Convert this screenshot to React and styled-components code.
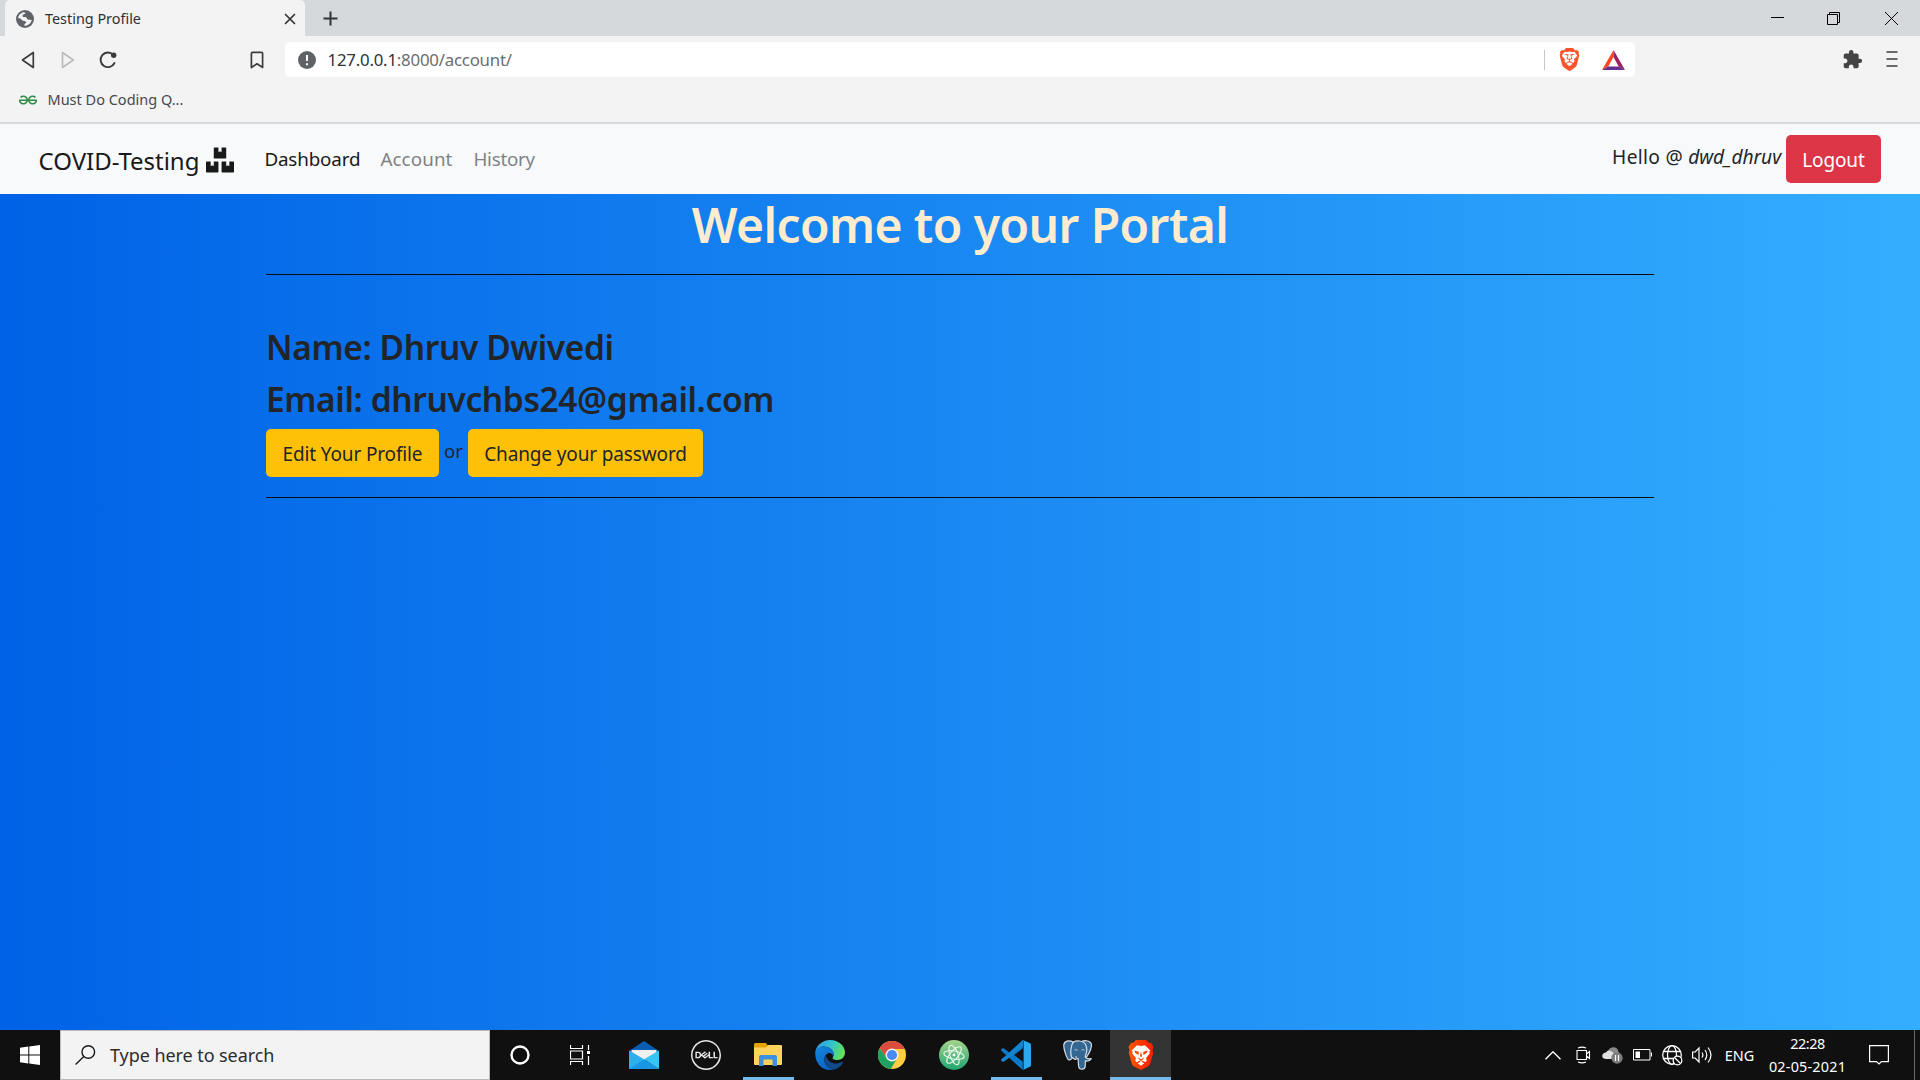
import React from "react";
import styled, { createGlobalStyle } from "styled-components";
import { FaBoxes } from "react-icons/fa";
import { SiBrave, SiDell, SiGeeksforgeeks } from "react-icons/si";
import { MdExtension } from "react-icons/md";

const GlobalStyle = createGlobalStyle`
  * { box-sizing: border-box; }
  body {
    margin: 0;
    font-family: "Noto Sans", "Open Sans", sans-serif;
    font-weight: 400;
    color: #212529;
    overflow: hidden;
  }
  svg { display: block; flex: none; }
`;

const Screen = styled.div`
  width: 1920px;
  height: 1080px;
  display: flex;
  flex-direction: column;
  overflow: hidden;
  white-space: nowrap;
`;

/* browser chrome */
const TabStrip = styled.div`
  height: 36px;
  flex: none;
  display: flex;
  align-items: stretch;
  padding-left: 5px;
  background: #d5d9dc;
`;

const Tab = styled.div`
  width: 300px;
  height: 37px;
  display: flex;
  align-items: center;
  padding: 0 9px 0 11px;
  background: #f3f3f3;
  border-radius: 5px 5px 0 0;
  font-size: 14.4px;
  color: #2e3033;
`;

const TabTitle = styled.span`
  flex: 1;
  margin-left: 11px;
`;

const NewTab = styled.div`
  width: 50px;
  display: grid;
  place-items: center;
  padding-top: 1px;
`;

const WindowControls = styled.div`
  margin-left: auto;
  display: flex;
`;

const WindowButton = styled.div`
  width: ${(p) => p.$w || 57}px;
  height: 37px;
  display: grid;
  place-items: center;
`;

const Toolbar = styled.div`
  height: 48px;
  flex: none;
  display: flex;
  align-items: center;
  background: #f3f3f3;
`;

const NavButtons = styled.div`
  width: 285px;
  display: flex;
  align-items: center;
  padding-left: 21px;
`;

const Reload = styled.div`
  margin-left: 24px;
`;
const Forward = styled.div`
  margin-left: 26px;
`;
const BookmarkMark = styled.div`
  margin-left: auto;
  margin-right: 21px;
`;

const AddressBar = styled.div`
  width: 1350px;
  height: 35px;
  display: flex;
  align-items: center;
  margin-bottom: 1px;
  padding: 0 10px 0 13px;
  background: #fff;
  border-radius: 5px;
  font-size: 16.8px;
  letter-spacing: -0.2px;
  color: #6a6d70;
`;

const Url = styled.span`
  flex: 1;
  margin-left: 11.5px;
  b {
    font-weight: 400;
    color: #303234;
  }
`;

const Divider = styled.i`
  width: 1px;
  height: 20px;
  margin-right: 13px;
  background: #c4c6c8;
`;

const Shield = styled(SiBrave)`
  margin-right: 21px;
  color: #fb542b;
`;

const ToolbarEnd = styled.div`
  margin-left: auto;
  display: flex;
  align-items: center;
  gap: 23px;
  padding: 0 22px 2px 0;
  color: #444;
`;

const BookmarksBar = styled.div`
  height: 40px;
  flex: none;
  display: flex;
  align-items: flex-start;
  gap: 10.5px;
  padding: 5px 0 0 19px;
  background: #f3f3f3;
  border-bottom: 2px solid #d5d9dc;
  font-size: 14.5px;
  line-height: 20px;
  color: #47494c;
  svg { margin-top: 2px; }
`;

/* web page */
const Navbar = styled.nav`
  height: 70px;
  flex: none;
  display: flex;
  align-items: center;
  padding: 0 39px 0 38.5px;
  background: #f8f9fb;
`;

const Brand = styled.div`
  display: flex;
  align-items: center;
  gap: 7px;
  margin-right: 30px;
  padding-top: 2px;
  font-size: 24px;
  letter-spacing: -0.02px;
  color: #191919;
`;

const NavLinks = styled.div`
  display: flex;
  gap: 20px;
  padding-top: 1px;
  font-size: 18.8px;
  line-height: 31px;
`;

const NavLink = styled.span`
  width: ${(p) => p.$w}px;
  letter-spacing: ${(p) => p.$track}px;
  color: ${(p) => (p.$active ? "#191919" : "#808183")};
`;

const Greeting = styled.div`
  margin: -3px 5px 3px auto;
  font-size: 19.2px;
  letter-spacing: 0.3px;
  em {
    letter-spacing: -0.1px;
  }
`;

const Button = styled.div`
  width: ${(p) => p.$w}px;
  height: 48px;
  display: flex;
  align-items: center;
  justify-content: center;
  padding-top: 2px;
  border-radius: 5px;
  font-size: 19px;
  letter-spacing: -0.14px;
  background: ${(p) => (p.$danger ? "#dc3545" : "#ffc107")};
  color: ${(p) => (p.$danger ? "#fff" : "#212529")};
`;

const Page = styled.main`
  flex: 1;
  min-height: 0;
  background: linear-gradient(to right, #0062e6, #33aeff);
`;

const Container = styled.div`
  width: 1388px;
  margin: 0 auto;
`;

const Title = styled.h1`
  margin: 0;
  padding-top: 1px;
  height: 60px;
  text-align: center;
  font-size: 48px;
  font-weight: 600;
  line-height: 60px;
  letter-spacing: -0.58px;
  color: #ffebcd;
`;

const Rule = styled.hr`
  height: 1px;
  margin: 20px 0;
  border: 0;
  background: #0b0c10;
`;

const Details = styled.section`
  padding-top: 31px;
`;

const Field = styled.h3`
  height: 42px;
  margin: 0 0 10px;
  font-size: 33.5px;
  font-weight: 600;
  line-height: 42px;
  letter-spacing: -0.38px;
`;

const Actions = styled.div`
  display: flex;
  align-items: center;
  margin-top: -1px;
`;

const Or = styled.span`
  width: 29px;
  margin-bottom: 5px;
  text-align: center;
  font-size: 18.6px;
`;

/* taskbar */
const Taskbar = styled.footer`
  height: 50px;
  flex: none;
  display: flex;
  background: #101010;
  color: #fff;
`;

const TaskSlot = styled.div`
  width: ${(p) => p.$w || 60}px;
  height: 50px;
  display: grid;
  place-items: center;
`;

const SearchBox = styled.div`
  width: 430px;
  display: flex;
  align-items: center;
  gap: 14px;
  padding: 0 0 0 14px;
  border: 1px solid #b9b9b9;
  background: #f3f3f3;
  font-size: 18px;
  letter-spacing: -0.07px;
  color: #2c2c2c;
`;

const Apps = styled.div`
  display: flex;
  margin-left: 3px;
`;

const AppSlot = styled.div`
  width: ${(p) => (p.$active ? 61 : 62)}px;
  height: 50px;
  display: flex;
  flex-direction: column;
  align-items: center;
  justify-content: space-between;
  margin-left: ${(p) => (p.$active ? 1 : 0)}px;
  padding-top: 10px;
  background: ${(p) => (p.$active ? "#333" : "transparent")};
  &::after {
    content: "";
    width: ${(p) => (p.$active ? 61 : 51)}px;
    height: 3px;
    background: ${(p) => (p.$running ? "#76b9ed" : "transparent")};
  }
`;

const Tray = styled.div`
  margin-left: auto;
  display: flex;
  align-items: center;
  font-size: 14.4px;
`;

const Clock = styled.div`
  width: 91px;
  text-align: center;
  line-height: 23px;
  letter-spacing: 0.2px;
  span {
    display: block;
    letter-spacing: -0.5px;
  }
`;

const ShowDesktop = styled.div`
  width: 6px;
  height: 50px;
  margin-left: 9px;
  border-left: 1px solid #6b6b6b;
`;

const GlobeIcon = () => (
  <svg width="18" height="18" viewBox="0 0 18 18">
    <circle cx="9" cy="9" r="9" fill="#5f6368" />
    <path
      d="M2 8.2c.3-2.800 2.300-5.200 5.200-6l2.300.6c-.2 1.200-1.300 1.700-2.700 1.800-.3 1.500-.5 2.300.8 2.500 1.700-.1 3.200.1 3.500 1.800.9.700 2.200.9 3.500.8l1.200.3c-.6 2.800-3 5.300-6 5.700-.5 0-1.200-.100-1.600-.300.200-1.400.9-1.800 2-2.300.2-1.300-.5-2-1.800-2.200C6.500 10.700 5 9.500 4.300 8.200z"
      fill="#f3f3f3"
    />
  </svg>
);

const BraveIcon = () => (
  <svg width="26" height="30" viewBox="0 0 26 30">
    <defs>
      <linearGradient id="braveShield" x1="0" x2="1">
        <stop offset="0" stopColor="#ff5a00" />
        <stop offset=".6" stopColor="#ff2f00" />
        <stop offset="1" stopColor="#fb1d00" />
      </linearGradient>
    </defs>
    <path d="M8 0h10l3 3 2-.2L25.500 7l-1 3 .7 3-3 10.500c-.4 1.300-1.200 2.200-2.300 3L13 30l-6.900-3.500c-1.100-.8-1.900-1.700-2.300-3L.8 13l.7-3-1-3L3 2.800 5 3z" fill="url(#braveShield)" />
    <path d="M9 5.200l4 .7 4-.7 5.300 5.200-1 1.400.4 1.800-3.700 4.600.8 2.500-1.600 1.500-2.600-1.500L13 22l-1.600-1.300-2.600 1.500-1.600-1.500.8-2.500-3.700-4.600.4-1.800-1-1.400z" fill="#fff" />
    <path d="M6.300 10.400l4.500 1.300-.2 3.200-3.300-2zM19.700 10.400l-4.500 1.300.2 3.200 3.300-2zM13 11l1 5-1 1.500-1-1.500zM9.800 17.300l3.200 2 3.200-2-1.500 2.500L13 21l-1.700-1.200z" fill="#ff4300" />
    <path d="M9.700 23.300l3.300-1.700 3.300 1.700L13 25.800z" fill="#fff" />
  </svg>
);

const MailIcon = () => (
  <svg width="30" height="30" viewBox="0 0 30 30">
    <path d="M0 11L15 1l15 10v5H0z" fill="#0a5db0" />
    <path d="M2.500 10h25v10h-25z" fill="#f0f0f0" />
    <path d="M0 10.500v18.500h30z" fill="#28a8ea" />
    <path d="M30 10.500V29L15 19.200z" fill="#38c5f5" />
    <path d="M15 19.200L30 29H0z" fill="#1a97e4" />
    <path d="M0 10.500l15 8.700L0 29z" fill="#2bb0ed" />
  </svg>
);

const FolderIcon = () => (
  <svg width="28" height="30" viewBox="0 0 28 30">
    <path d="M0 4.500Q0 3 1.500 3H12l2 3h-1v4H0z" fill="#e6a300" />
    <path d="M0 7.500h12l2-2.500h13q1 0 1 1v18q0 1-1 1H1q-1 0-1-1z" fill="#ffd35c" />
    <path d="M5 26V17q0-2 2-2h14q2 0 2 2v9h-4.500v-6.500h-9V26z" fill="#3c8fdd" />
  </svg>
);

const EdgeIcon = () => (
  <svg width="30" height="30" viewBox="0 0 30 30">
    <defs>
      <linearGradient id="edgeTop" x1="0" y1=".3" x2="1" y2=".6">
        <stop offset="0" stopColor="#2b9fe8" />
        <stop offset=".5" stopColor="#35c4c9" />
        <stop offset="1" stopColor="#67e34e" />
      </linearGradient>
      <linearGradient id="edgeSide" x1="0" y1="0" x2=".5" y2="1">
        <stop offset="0" stopColor="#1585dc" />
        <stop offset="1" stopColor="#0868c7" />
      </linearGradient>
    </defs>
    <path d="M.2 13C1 5.500 7.300 0 15 0c8.500 0 15 5.800 15 12.500 0 4.500-3.300 7.500-7.500 7.500-3.800 0-5.200-1.500-5-2.300.2-.7 1.200-1.300 1.200-3.200C18.700 10.500 14.800 6.500 9 6.500 4.800 6.500 1.800 9 .2 13z" fill="url(#edgeTop)" />
    <path d="M.2 13C1 9 4.500 6.400 9 6.400c6 0 9.700 4 9.700 8.100 0 .7-.2 1.400-.5 2-.5-2.500-2.400-3.800-4.500-3.500C10 14.200 8 18.500 10 23c1.300 3 4 5.800 7.500 6.700C8.500 31.500 0 24 .2 13z" fill="url(#edgeSide)" />
    <path d="M10.800 15.200C8 18.500 9 24 12.500 27.500c2 1.900 4 2.500 6 2.200 4-.8 7.500-3.300 9.500-6.700.4-.8-.2-1.200-.9-.9-6.600 3.200-14.300.9-16.300-6.900z" fill="#114a8b" />
    <path d="M12.300 14.300C11.500 17.500 13.500 20.500 18 21c-1.500-1.500-1.200-2.800-.2-4.500-.2-2.500-3-4-5.500-2.200z" fill="#101010" />
  </svg>
);

const ChromeIcon = () => (
  <svg width="28" height="30" viewBox="0 0 28 30">
    <circle cx="14" cy="15" r="14" fill="#ffcd40" />
    <path d="M1.900 8A14 14 0 0 0 12.800 29L19.200 18 14 15 8.800 18z" fill="#1da261" />
    <path d="M1.900 8L8.800 18 14 9h12.700A14 14 0 0 0 1.900 8z" fill="#db4c3f" />
    <circle cx="14" cy="15" r="6.500" fill="#f4f4f4" />
    <circle cx="14" cy="15" r="5.100" fill="#4a8af4" />
  </svg>
);

const AtomIcon = () => (
  <svg width="30" height="30" viewBox="0 0 30 30">
    <defs>
      <linearGradient id="atomDisc" x1="0" y1="0" x2="0" y2="1">
        <stop offset="0" stopColor="#a5d48a" />
        <stop offset="1" stopColor="#1fa671" />
      </linearGradient>
    </defs>
    <circle cx="15" cy="15" r="15" fill="url(#atomDisc)" />
    <g fill="none" stroke="#e9f7ec" strokeWidth="1.100">
      <ellipse cx="15" cy="15" rx="10.300" ry="4" transform="rotate(10 15 15)" />
      <ellipse cx="15" cy="15" rx="10.300" ry="4" transform="rotate(70 15 15)" />
      <ellipse cx="15" cy="15" rx="10.300" ry="4" transform="rotate(130 15 15)" />
    </g>
    <circle cx="15" cy="15" r="1.400" fill="#fff" />
  </svg>
);

const CodeIcon = () => (
  <svg width="30" height="30" viewBox="0 0 30 30">
    <path d="M21.800 0L8.200 12.600 3 8.600Q2 8 1 8.700L.6 9.100q-1 1 0 2L21.800 30z" fill="#0a79c7" />
    <path d="M.6 18.900q-1 1 0 2l.6.500q1 .7 1.900 0L8.500 17.400 22 6V0L8 12.900z" fill="#1284d0" />
    <path d="M21.800 0L29 3.300q1 .5 1 1.600v20.200q0 1.100-1 1.600L21.800 30q.8-.6.8-1.800V1.800Q22.600.6 21.800 0z" fill="#2aa9f3" />
    <path d="M22 8.200L13.200 15l8.800 6.800z" fill="#101010" />
  </svg>
);

const ElephantIcon = () => (
  <svg width="30" height="30" viewBox="0 0 30 30">
    <g fill="#336791" stroke="#d8dde2" strokeWidth="1.200" strokeLinejoin="round">
      <path d="M18 2c3-2 8-1.700 10 1.200 1.500 3-1.300 9.500-4 13.300l-2.300 1L18 12z" />
      <path d="M10 2C6-.2 1.200.8.8 5c-.2 4 2.200 11.200 4 14 1 1.500 2.500 1 4-.7L12 14z" />
      <path d="M8.500 17C7 12 8 4.500 10.500 2 13.500.3 20 .6 22 3.500c2.500 3.500 2 8.500.2 13 .8 2.300 3 2.600 6 2.200-.8 1.500-3.500 2.600-5.800 2.200l-.2 5.800c-.5 3-5.800 3.600-6.400.3-.6-3-.3-5.500-.8-8.500L12 19.500z" />
    </g>
    <path d="M11.500 10c1.300-.6 2.500-.3 3.200.5M18.700 10c1-.6 2-.4 2.700.2M15 18.500c-1.300.3-2.200-1-2-2.500" fill="none" stroke="#d8dde2" strokeWidth="1" />
  </svg>
);

export default function App() {
  return (
    <Screen>
      <GlobalStyle />
      <TabStrip>
        <Tab>
          <GlobeIcon />
          <TabTitle>Testing Profile</TabTitle>
          <svg width="12" height="12" viewBox="0 0 12 12" stroke="#333" strokeWidth="1.700" strokeLinecap="round">
            <path d="M1.500 1.500l9 9M10.500 1.500l-9 9" />
          </svg>
        </Tab>
        <NewTab>
          <svg width="15" height="15" viewBox="0 0 15 15" stroke="#333" strokeWidth="2">
            <path d="M7.500.5v14M.5 7.500h14" />
          </svg>
        </NewTab>
        <WindowControls>
          <WindowButton $w={56}>
            <svg width="13" height="13"><path d="M0 5.500h13" stroke="#000" /></svg>
          </WindowButton>
          <WindowButton $w={57}>
            <svg width="13" height="13" fill="none" stroke="#000">
              <path d="M.5 2.500h10v10H.5zM2.500 2.500v-2h10v10h-2" />
            </svg>
          </WindowButton>
          <WindowButton $w={58}>
            <svg width="13" height="13" stroke="#000"><path d="M0 0l13 13M13 0L0 13" /></svg>
          </WindowButton>
        </WindowControls>
      </TabStrip>

      <Toolbar>
        <NavButtons>
          <svg width="14" height="18" viewBox="0 0 14 18" fill="none" stroke="#3c3c3c" strokeWidth="1.700" strokeLinejoin="round">
            <path d="M12.300 1.500v15L1.500 9z" />
          </svg>
          <Forward>
            <svg width="14" height="18" viewBox="0 0 14 18" fill="none" stroke="#bcbcbc" strokeWidth="1.700" strokeLinejoin="round">
              <path d="M1.500 1.500v15L12.300 9z" />
            </svg>
          </Forward>
          <Reload>
            <svg width="18" height="18" viewBox="0 0 18 18" fill="none" stroke="#3c3c3c" strokeWidth="1.900" strokeLinecap="round">
              <path d="M14.200 3.800A7.300 7.300 0 1 0 15.500 12" />
              <circle cx="14.700" cy="4.200" r="2.700" fill="#3c3c3c" stroke="none" />
            </svg>
          </Reload>
          <BookmarkMark>
            <svg width="14" height="18" viewBox="0 0 14 18" fill="none" stroke="#3c3c3c" strokeWidth="1.700" strokeLinejoin="round">
              <path d="M1.400 2.500Q1.400 1.400 2.500 1.400h9Q12.600 1.400 12.600 2.500V16.500L7 12.800 1.400 16.500z" />
            </svg>
          </BookmarkMark>
        </NavButtons>
        <AddressBar>
          <svg width="18" height="18" viewBox="0 0 18 18">
            <circle cx="9" cy="9" r="9" fill="#5f6368" />
            <path d="M9 4v6M9 12.200v2" stroke="#fff" strokeWidth="2" />
          </svg>
          <Url><b>127.0.0.1</b>:8000/account/</Url>
          <Divider />
          <Shield size={23} />
          <svg width="23" height="20" viewBox="0 0 23 20">
            <path d="M11.500 0v7L6.300 16.500 0 20z" fill="#ff4724" />
            <path d="M11.500 0L23 20l-6.300-3.500L11.500 7z" fill="#9e1f63" />
            <path d="M0 20l6.300-3.500h10.400L23 20z" fill="#662d91" />
          </svg>
        </AddressBar>
        <ToolbarEnd>
          <MdExtension size={21} />
          <svg width="12" height="16" stroke="#3c3c3c" strokeWidth="1.600">
            <path d="M.5 1h11M.5 8h11M.5 15h11" />
          </svg>
        </ToolbarEnd>
      </Toolbar>

      <BookmarksBar>
        <SiGeeksforgeeks size={18} color="#2f8d46" />
        Must Do Coding Q...
      </BookmarksBar>

      <Navbar>
        <Brand>
          COVID-Testing
          <FaBoxes size={28} />
        </Brand>
        <NavLinks>
          <NavLink $active $w={96} $track={-0.15}>Dashboard</NavLink>
          <NavLink $w={73} $track={0.1}>Account</NavLink>
          <NavLink $w={64} $track={-0.25}>History</NavLink>
        </NavLinks>
        <Greeting>Hello @ <em>dwd_dhruv</em></Greeting>
        <Button $danger $w={95}>Logout</Button>
      </Navbar>

      <Page>
        <Container>
          <Title>Welcome to your Portal</Title>
          <Rule />
          <Details>
            <Field>Name: Dhruv Dwivedi</Field>
            <Field>Email: dhruvchbs24@gmail.com</Field>
            <Actions>
              <Button $w={173}>Edit Your Profile</Button>
              <Or>or</Or>
              <Button $w={235}>Change your password</Button>
            </Actions>
          </Details>
          <Rule />
        </Container>
      </Page>

      <Taskbar>
        <TaskSlot>
          <svg width="20" height="20" viewBox="0 0 20 20" fill="#fff">
            <path d="M0 2.800L8.300 1.600V9.500H0zM9.300 1.500L20 0v9.500H9.300zM0 10.500h8.300v7.900L0 17.200zM9.300 10.500H20V20L9.300 18.500z" />
          </svg>
        </TaskSlot>
        <SearchBox>
          <svg width="21" height="20" viewBox="0 0 21 20" fill="none" stroke="#1a1a1a" strokeWidth="1.400">
            <circle cx="13.300" cy="7" r="6.300" />
            <path d="M8.800 11.500L.6 19.500" />
          </svg>
          Type here to search
        </SearchBox>
        <TaskSlot>
          <svg width="20" height="20"><circle cx="10" cy="10" r="8.500" fill="none" stroke="#fff" strokeWidth="2.400" /></svg>
        </TaskSlot>
        <TaskSlot>
          <svg width="20" height="20" fill="none" stroke="#fff" strokeWidth="1.200">
            <path d="M.5 0v3.500h12V0M.5 20v-3.500h12V20M.5 6h12v8H.5zM18.500 0v5M18.500 11v9" />
            <path d="M17 6h3v3h-3z" fill="#fff" stroke="none" />
          </svg>
        </TaskSlot>
        <Apps>
          <AppSlot><MailIcon /></AppSlot>
          <AppSlot><SiDell size={30} color="#e8e8e8" /></AppSlot>
          <AppSlot $running><FolderIcon /></AppSlot>
          <AppSlot><EdgeIcon /></AppSlot>
          <AppSlot><ChromeIcon /></AppSlot>
          <AppSlot><AtomIcon /></AppSlot>
          <AppSlot $running><CodeIcon /></AppSlot>
          <AppSlot><ElephantIcon /></AppSlot>
          <AppSlot $running $active><BraveIcon /></AppSlot>
        </Apps>
        <Tray>
          <TaskSlot $w={31}>
            <svg width="16" height="9" fill="none" stroke="#fff" strokeWidth="1.400"><path d="M.5 8.300L8 .8l7.500 7.500" /></svg>
          </TaskSlot>
          <TaskSlot $w={30}>
            <svg width="15" height="18" fill="none" stroke="#fff" strokeWidth="1.100">
              <path d="M1 4.500h9.500v9H1zM10.500 8l3-2.500v7l-3-2.500M2 2Q6 .3 10 2M2 16q4 1.700 8 0" />
            </svg>
          </TaskSlot>
          <TaskSlot $w={29}>
            <svg width="21" height="18" viewBox="0 0 21 18">
              <path d="M6 5Q8 1 12 1.300 16 2 16.500 6L19 9v3H8z" fill="#8a8a8a" />
              <path d="M3.500 13Q0 12.500.3 9.500.8 6.800 4 6.500 5.500 3.500 9 5l5 4v4z" fill="#e0e0e0" />
              <circle cx="15" cy="12" r="5.700" fill="#7b7b7b" />
              <path d="M13.500 9v6M16.500 9v6" stroke="#fff" strokeWidth="1.200" />
            </svg>
          </TaskSlot>
          <TaskSlot $w={30}>
            <svg width="19" height="12" fill="none" stroke="#fff">
              <path d="M.5.5h16.500v10.500H.5zM18.500 3.500v4" />
              <path d="M2.500 2.500h4.500v6.500H2.500z" fill="#fff" stroke="none" />
            </svg>
          </TaskSlot>
          <TaskSlot $w={30}>
            <svg width="21" height="21" viewBox="0 0 21 21" fill="none" stroke="#fff" strokeWidth="1.300">
              <circle cx="10" cy="10" r="9.300" />
              <ellipse cx="10" cy="10" rx="4.500" ry="9.300" />
              <path d="M1.500 6.500h17M1.500 13.500h17" />
              <circle cx="15.500" cy="15.500" r="4.300" fill="#101010" />
              <path d="M12.500 12.500l6 6" />
            </svg>
          </TaskSlot>
          <TaskSlot $w={30}>
            <svg width="21" height="18" fill="none" stroke="#fff" strokeWidth="1.200">
              <path d="M.6 6h2.600L7 2v14l-3.800-4H.6zM10 6.500q1.800 2.500 0 5M13 4q3.500 5 0 10M16 1.500q6 7.500 0 15" />
            </svg>
          </TaskSlot>
          <TaskSlot $w={45}>ENG</TaskSlot>
          <Clock><span>22:28</span>02-05-2021</Clock>
          <TaskSlot $w={52}>
            <svg width="20" height="20" fill="none" stroke="#fff" strokeWidth="1.200">
              <path d="M.6 .6h18.800v16H12.500L10 19l-2.500-2.400H.6z" />
            </svg>
          </TaskSlot>
          <ShowDesktop />
        </Tray>
      </Taskbar>
    </Screen>
  );
}
